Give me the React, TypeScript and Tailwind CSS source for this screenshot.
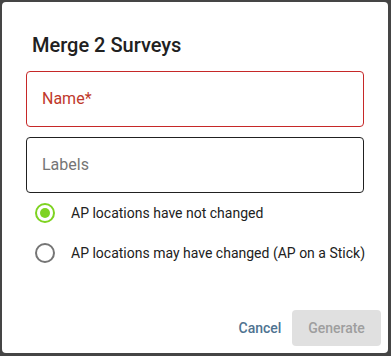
import React from "react";

function Radio({ checked }: { checked: boolean }) {
  return (
    <svg width="20" height="20" viewBox="0 0 20 20" className="shrink-0">
      <circle cx="10" cy="10" r="9" fill="none" stroke={checked ? "#7ed321" : "#757575"} strokeWidth="2" />
      {checked && <circle cx="10" cy="10" r="5" fill="#7ed321" />}
    </svg>
  );
}

export default function App() {
  return (
    <div className="w-[391px] h-[356px] bg-[#454545] pt-[2px] pl-[2px] overflow-hidden" style={{ fontFamily: "Roboto, 'Liberation Sans', sans-serif" }}>
      <div className="w-[386px] h-[351px] bg-white rounded-[4px] flex flex-col">
        <div className="pl-[30px] pt-[27px] text-[20px] leading-[32px] font-medium text-[#212121]">Merge 2 Surveys</div>
        <div className="ml-[24px] mt-[10px] w-[338px] h-[56px] border border-[#c62828] rounded-[4px] flex items-center pl-[15px] text-[16px] text-[#c0392b]">
          Name*
        </div>
        <div className="ml-[24px] mt-[10px] w-[338px] h-[56px] border border-[#212121] rounded-[4px] flex items-center pl-[15px] text-[16px] text-[#757575]">
          Labels
        </div>
        <div className="flex flex-col">
          <div className="h-[40px] flex items-center pl-[33px] gap-[16px] text-[14px] text-[#212121]">
            <Radio checked={true} />
            <span>AP locations have not changed</span>
          </div>
          <div className="h-[40px] flex items-center pl-[33px] gap-[16px] text-[14px] text-[#212121]">
            <Radio checked={false} />
            <span>AP locations may have changed (AP on a Stick)</span>
          </div>
        </div>
        <div className="flex-1" />
        <div className="flex justify-end items-center pr-[7px] pb-[7px]">
          <button className="w-[64px] h-[36px] text-[14px] font-medium text-[#4f7391]">Cancel</button>
          <button className="w-[89px] h-[36px] rounded-[4px] bg-[#e0e0e0] text-[14px] font-medium text-[#9e9e9e]">Generate</button>
        </div>
      </div>
    </div>
  );
}
